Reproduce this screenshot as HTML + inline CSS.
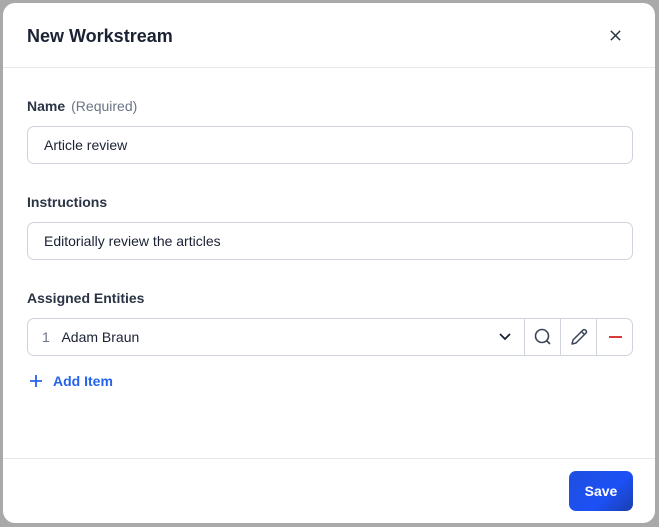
<!DOCTYPE html>
<html><head><style>
*{box-sizing:border-box;margin:0;padding:0}
body{width:659px;height:527px;background:#a9a9a9;font-family:"Liberation Sans",sans-serif;position:relative;overflow:hidden}
.m{position:absolute;left:3px;top:3px;width:652px;height:520px;background:#fff;border-radius:12px}
.t{position:absolute;left:24px;top:23px;font-size:18px;font-weight:bold;color:#1a2233}
.hr{position:absolute;left:0;right:0;height:1px;background:#e5e7eb}
.l{position:absolute;left:24px;font-size:14px;font-weight:bold;color:#2b3445}
.l span{font-weight:normal;color:#6b7385;margin-left:6px}
.i{position:absolute;left:24px;width:606px;height:38px;border:1px solid #cfd3dc;border-radius:7px;font-size:14px;color:#1a2233;padding:10px 16px}
.d{position:absolute;top:0;bottom:0;width:1px;background:#cfd3dc}
.ic{position:absolute;top:0;height:36px;display:flex;align-items:center;justify-content:center}
.add{position:absolute;left:26px;top:370px;font-size:14px;font-weight:bold;color:#2563eb;display:flex;align-items:center;gap:10px}
.save{position:absolute;left:566px;top:468px;width:64px;height:40px;border-radius:7px;background:linear-gradient(135deg,#1e4fe0,#1d50f5 60%,#1a3fb0);color:#fff;font-weight:bold;font-size:14px;display:flex;align-items:center;justify-content:center}
</style></head><body>
<div class="m">
<div class="t">New Workstream</div>
<svg style="position:absolute;left:606px;top:26px" width="13" height="13" viewBox="0 0 14 14"><path d="M2 2L12 12M12 2L2 12" stroke="#2b3445" stroke-width="1.6"/></svg>
<div class="hr" style="top:64px"></div>
<div class="l" style="top:95px">Name<span>(Required)</span></div>
<div class="i" style="top:123px">Article review</div>
<div class="l" style="top:191px">Instructions</div>
<div class="i" style="top:219px">Editorially review the articles</div>
<div class="l" style="top:287px">Assigned Entities</div>
<div class="i" style="top:315px;padding-left:14px"><span style="color:#6b7385">1</span>&nbsp;&nbsp;&nbsp;Adam Braun
<svg style="position:absolute;left:470px;top:13px" width="14" height="10" viewBox="0 0 14 10"><path d="M2 2L7 7L12 2" stroke="#1a2233" stroke-width="1.8" fill="none"/></svg>
<div class="d" style="left:496px"></div><div class="d" style="left:532px"></div><div class="d" style="left:568px"></div>
<div class="ic" style="left:497px;width:35px"><svg width="20" height="20" viewBox="0 0 20 20"><circle cx="9" cy="9" r="6.5" stroke="#3b4557" stroke-width="1.6" fill="none"/><path d="M13.5 13.5L17 17" stroke="#3b4557" stroke-width="1.6"/></svg></div>
<div class="ic" style="left:533px;width:35px"><svg width="20" height="20" viewBox="0 0 20 20"><path d="M3 17L4 13L14 3Q15.5 2 17 3.5Q18 5 17 6L7 16Z M12.5 4.5L15.5 7.5" stroke="#3b4557" stroke-width="1.5" fill="none" stroke-linejoin="round"/></svg></div>
<div class="ic" style="left:569px;width:36px"><div style="width:13px;height:2px;background:#dc3a3a"></div></div>
</div>
<div class="add"><svg width="14" height="14" viewBox="0 0 14 14"><path d="M7 1V13M1 7H13" stroke="#2563eb" stroke-width="1.8"/></svg>Add Item</div>
<div class="hr" style="top:455px"></div>
<div class="save">Save</div>
</div>
</body></html>
